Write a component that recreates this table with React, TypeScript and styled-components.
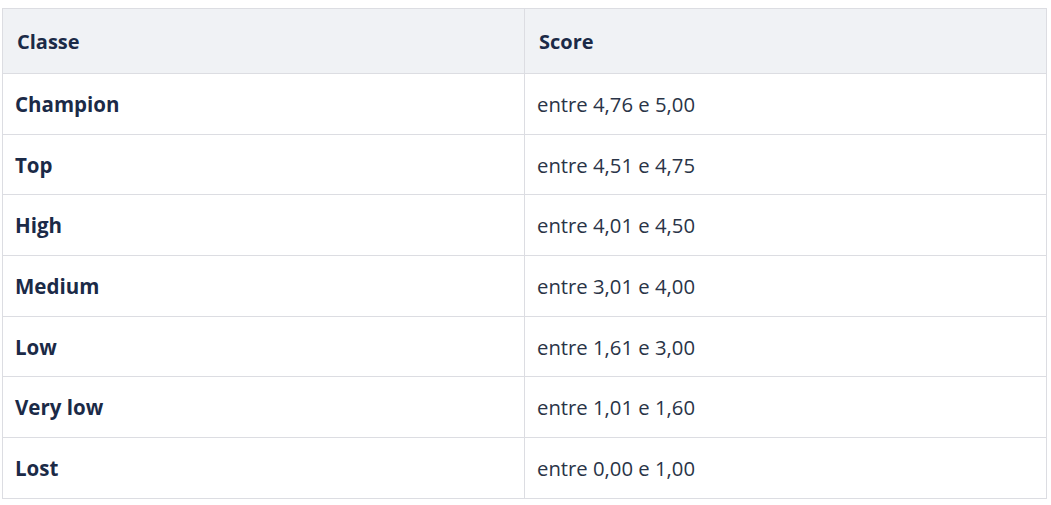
import React from "react";
import styled, { createGlobalStyle } from "styled-components";

const Global = createGlobalStyle`
  html, body { margin: 0; padding: 0; background: #ffffff; }
  body { font-family: "Open Sans", "Noto Sans", sans-serif; }
`;

const Wrap = styled.div`
  padding: 8px 4px 0 2px;
`;

const Table = styled.table`
  width: 1045px;
  border-collapse: collapse;
  table-layout: fixed;
  border: 1px solid #dcdde2;
`;

const HeadCell = styled.th`
  background: #f0f2f5;
  border: 1px solid #dcdde2;
  height: 65px;
  padding: 0 14px;
  text-align: left;
  font-size: 20px;
  font-weight: 700;
  color: #1b2a47;
  box-sizing: border-box;
`;

const Cell = styled.td<{ $bold?: boolean }>`
  border: 1px solid #dcdde2;
  height: 60.7px;
  padding: 0 12px;
  font-size: ${(p) => (p.$bold ? "20.5px" : "20.3px")};
  font-weight: ${(p) => (p.$bold ? 700 : 400)};
  color: ${(p) => (p.$bold ? "#1b2a47" : "#2a3447")};
  box-sizing: border-box;
`;

const rows: [string, string][] = [
  ["Champion", "entre 4,76 e 5,00"],
  ["Top", "entre 4,51 e 4,75"],
  ["High", "entre 4,01 e 4,50"],
  ["Medium", "entre 3,01 e 4,00"],
  ["Low", "entre 1,61 e 3,00"],
  ["Very low", "entre 1,01 e 1,60"],
  ["Lost", "entre 0,00 e 1,00"],
];

export default function App() {
  return (
    <>
      <Global />
      <Wrap>
        <Table>
          <colgroup>
            <col style={{ width: "522px" }} />
            <col />
          </colgroup>
          <thead>
            <tr>
              <HeadCell>Classe</HeadCell>
              <HeadCell>Score</HeadCell>
            </tr>
          </thead>
          <tbody>
            {rows.map(([c, s]) => (
              <tr key={c}>
                <Cell $bold>{c}</Cell>
                <Cell>{s}</Cell>
              </tr>
            ))}
          </tbody>
        </Table>
      </Wrap>
    </>
  );
}
